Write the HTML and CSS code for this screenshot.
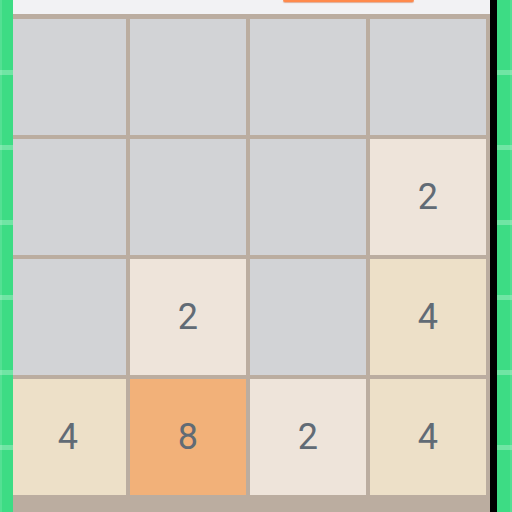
FILE: index.html
```html
<!DOCTYPE html>
<html>
<head>
<meta charset="utf-8">
<link rel="stylesheet" href="styles.css">
</head>
<body>
<div class="screen">
  <div class="strip strip-left"></div>
  <div class="main">
    <div class="topbar"><div class="new-game"></div></div>
    <div class="board">
      <div class="tile empty"></div>
      <div class="tile empty"></div>
      <div class="tile empty"></div>
      <div class="tile empty"></div>
      <div class="tile empty"></div>
      <div class="tile empty"></div>
      <div class="tile empty"></div>
      <div class="tile t2">2</div>
      <div class="tile empty"></div>
      <div class="tile t2">2</div>
      <div class="tile empty"></div>
      <div class="tile t4">4</div>
      <div class="tile t4">4</div>
      <div class="tile t8">8</div>
      <div class="tile t2">2</div>
      <div class="tile t4">4</div>
    </div>
  </div>
  <div class="divider"></div>
  <div class="strip strip-right"></div>
</div>
</body>
</html>
```

FILE: styles.css
```css
html, body {
  margin: 0;
  padding: 0;
  width: 512px;
  height: 512px;
  overflow: hidden;
  background: #f2f2f4;
}
.screen {
  display: flex;
  width: 512px;
  height: 512px;
}
.strip {
  height: 512px;
  flex: none;
  background: repeating-linear-gradient(to bottom,
    #3ddc84 0px, #3ddc84 70px,
    #70e5a4 70px, #70e5a4 75px,
    #3ddc84 75px, #3ddc84 73.2px);
}
.strip-left {
  width: 13px;
  box-shadow: inset 2px 0 0 rgba(255,255,255,0.12);
}
.strip-right {
  width: 15px;
  box-shadow: inset -2px 0 0 rgba(255,255,255,0.12);
}
.divider {
  width: 7px;
  flex: none;
  background: #000;
}
.main {
  width: 477px;
  flex: none;
  height: 512px;
  overflow: hidden;
  display: flex;
  flex-direction: column;
  background: #f2f2f4;
}
.topbar {
  height: 14px;
  flex: none;
  display: flex;
  justify-content: flex-end;
  padding-right: 76px;
}
.new-game {
  width: 131px;
  height: 2px;
  background: #ff8a4c;
  border-radius: 0 0 3px 3px;
  box-shadow: 0 1px 1px rgba(200,90,40,0.45);
}
.board {
  margin-left: -8px;
  width: 475.5px;
  padding: 5px 5px 40px 5px;
  background: #bbada0;
  display: grid;
  grid-template-columns: repeat(4, 115.5px);
  grid-auto-rows: 115.5px;
  gap: 4.5px;
}
.tile {
  display: flex;
  align-items: center;
  justify-content: center;
  font-family: Roboto, "Noto Sans", sans-serif;
  font-size: 36px;
  font-weight: 400;
  color: #616b75;
}
.empty { background: #d2d3d6; }
.t2 { background: #eee4da; }
.t4 { background: #ede0c8; }
.t8 { background: #f2b179; }
```
